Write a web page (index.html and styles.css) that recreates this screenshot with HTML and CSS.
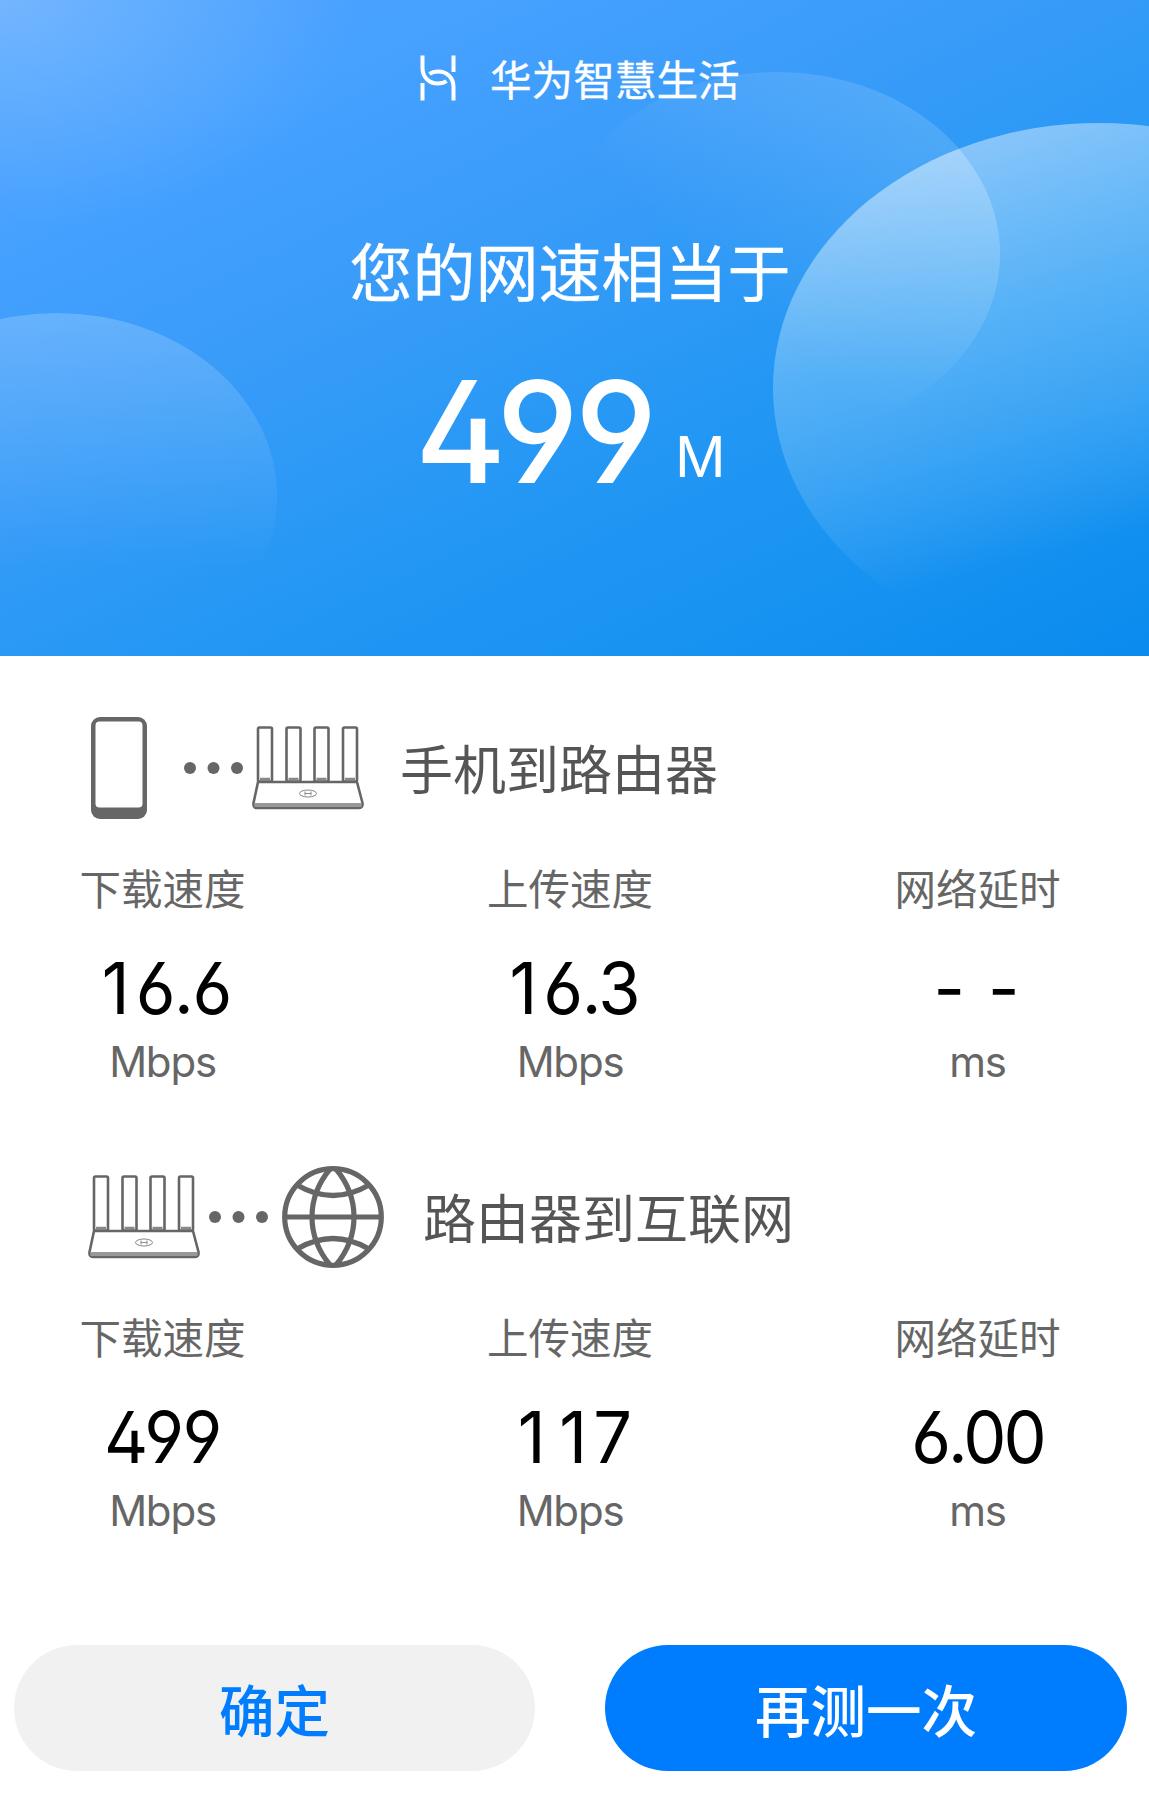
FILE: index.html
```html
<!DOCTYPE html>
<html lang="zh-CN">
<head>
  <meta charset="UTF-8" />
  <title>华为智慧生活 - 网络测速</title>
  <link rel="stylesheet" href="styles.css">
</head>
<body>

<!-- 图标 -->
<svg class="sprite" width="0" height="0">
  <symbol id="icon-router" viewBox="0 0 112 84">
    <g fill="none" stroke="#666" stroke-width="2.6" stroke-linejoin="round">
      <rect x="6" y="1.500" width="14" height="54" rx="1.5" />
      <rect x="34.5" y="1.500" width="14" height="54" rx="1.5" />
      <rect x="62.5" y="1.500" width="14" height="54" rx="1.5" />
      <rect x="91" y="1.500" width="14" height="54" rx="1.5" />
      <path d="M6 56H105L110.5 77Q111 82 107 82H5Q1 82 1.5 77Z" fill="#fff" />
    </g>
    <path d="M2.500 79H109.500" stroke="#999" stroke-width="4" />
    <path d="M3 82H109" stroke="#666" stroke-width="2" />
    <path d="M8 53H18M36.500 53H46.500M64.500 53H74.500M93 53H103" stroke="#888" stroke-width="2.400" />
    <g fill="none" stroke="#888" stroke-width="1">
      <ellipse cx="56" cy="67.500" rx="8.500" ry="3.500" />
      <path d="M53 65.500V69.500M59 65.500V69.500M53 67.500H59" />
    </g>
  </symbol>
  <symbol id="icon-dots" viewBox="0 0 60 12">
    <g fill="#666">
      <circle cx="6" cy="6" r="6" />
      <circle cx="29.500" cy="6" r="6" />
      <circle cx="53" cy="6" r="6" />
    </g>
  </symbol>
</svg>

<header class="hero">
  <svg class="hero-bg" viewBox="0 0 1149 656">
    <defs>
      <linearGradient id="g-mid" x1="0.8" y1="0.05" x2="0.3" y2="0.5">
        <stop offset="0" stop-color="#fff" stop-opacity="0.15" />
        <stop offset="1" stop-color="#fff" stop-opacity="0" />
      </linearGradient>
      <linearGradient id="g-right" x1="0.25" y1="0" x2="0.52" y2="0.78">
        <stop offset="0" stop-color="#fff" stop-opacity="0.46" />
        <stop offset="0.5" stop-color="#cdf0ff" stop-opacity="0.28" />
        <stop offset="1" stop-color="#fff" stop-opacity="0" />
      </linearGradient>
      <linearGradient id="g-over" x1="0.6" y1="0" x2="0.5" y2="1">
        <stop offset="0.1" stop-color="#fff" stop-opacity="0.14" />
        <stop offset="0.85" stop-color="#fff" stop-opacity="0" />
      </linearGradient>
      <linearGradient id="g-left" x1="0" y1="0" x2="0" y2="1">
        <stop offset="0" stop-color="#fff" stop-opacity="0.2" />
        <stop offset="0.7" stop-color="#fff" stop-opacity="0" />
      </linearGradient>
      <clipPath id="clip-right"><ellipse cx="1099" cy="388" rx="326" ry="265" /></clipPath>
    </defs>
    <ellipse cx="777" cy="254" rx="223" ry="182" fill="url(#g-mid)" />
    <ellipse cx="1099" cy="388" rx="326" ry="265" fill="url(#g-right)" />
    <ellipse cx="777" cy="254" rx="223" ry="182" fill="url(#g-over)" clip-path="url(#clip-right)" />
    <ellipse cx="57" cy="496" rx="220" ry="183" fill="url(#g-left)" />
  </svg>

  <div class="brand">
    <svg class="brand-logo" width="36" height="46" viewBox="0 0 36 46">
      <g fill="none" stroke="#fff" stroke-width="4">
        <path d="M2.500 0.500V13C2.500 23 10 28.500 17.500 28.500C21 28.500 24 28 26.500 26" />
        <path d="M33.500 45.500V32C33.500 22 26 16.500 18.500 16.500C15 16.500 12 17 9.500 19" />
        <path d="M2.500 28V45.500M33.500 0.500V17" />
      </g>
    </svg>
    <span>华为智慧生活</span>
  </div>
  <h1 class="headline">您的网速相当于</h1>
  <div class="speed">
    <span class="speed-num">499</span>
    <span class="speed-unit">M</span>
  </div>
</header>

<main class="content">

  <!-- 手机到路由器 -->
  <section class="group">
    <div class="group-head">
      <svg class="icon-phone" width="56" height="102" viewBox="0 0 56 102">
        <rect x="0" y="0" width="56" height="102" rx="9" fill="#666" />
        <rect x="4.500" y="4.500" width="47" height="86" rx="4" fill="#fff" />
      </svg>
      <svg class="dots-phone" width="60" height="12"><use href="#icon-dots" /></svg>
      <svg class="icon-router" width="112" height="84"><use href="#icon-router" /></svg>
      <h2 class="title-phone">手机到路由器</h2>
    </div>
    <div class="stats">
      <div class="stat">
        <div class="label">下载速度</div>
        <div class="value"><span class="one">1</span>6.6</div>
        <div class="unit">Mbps</div>
      </div>
      <div class="stat">
        <div class="label">上传速度</div>
        <div class="value"><span class="one">1</span>6.3</div>
        <div class="unit">Mbps</div>
      </div>
      <div class="stat">
        <div class="label">网络延时</div>
        <div class="value empty">- -</div>
        <div class="unit">ms</div>
      </div>
    </div>
  </section>

  <!-- 路由器到互联网 -->
  <section class="group">
    <div class="group-head">
      <svg class="icon-router first" width="112" height="84"><use href="#icon-router" /></svg>
      <svg class="dots-net" width="60" height="12"><use href="#icon-dots" /></svg>
      <svg class="icon-globe" width="102" height="102" viewBox="0 0 102 102">
        <g fill="none" stroke="#666" stroke-width="5.200">
          <circle cx="51" cy="51" r="48.300" />
          <path d="M2 51H100" />
          <path d="M48 3C24 32 24 70 48 99M54 3C78 32 78 70 54 99" />
          <path d="M15 19Q51 40 87 19M15 83Q51 62 87 83" />
        </g>
      </svg>
      <h2 class="title-net">路由器到互联网</h2>
    </div>
    <div class="stats">
      <div class="stat">
        <div class="label">下载速度</div>
        <div class="value">499</div>
        <div class="unit">Mbps</div>
      </div>
      <div class="stat">
        <div class="label">上传速度</div>
        <div class="value"><span class="one">1</span><span class="one">1</span>7</div>
        <div class="unit">Mbps</div>
      </div>
      <div class="stat">
        <div class="label">网络延时</div>
        <div class="value delay">6.00</div>
        <div class="unit">ms</div>
      </div>
    </div>
  </section>
</main>

<footer class="actions">
  <button class="btn">确定</button>
  <button class="btn btn-primary">再测一次</button>
</footer>

</body>
</html>
```
FILE: styles.css
```css
* {
  box-sizing: border-box;
}
body {
  margin: 0;
  height: 1811px;
  background: #fff;
  font-family: "Noto Sans CJK SC", sans-serif;
  overflow: hidden;
}
h1, h2 {
  margin: 0;
  font-weight: 400;
}
svg {
  display: block;
  flex: none;
}
.sprite {
  position: absolute;
}

/* 顶部 */
.hero {
  position: relative;
  height: 656px;
  padding-top: 48px;
  color: #fff;
  background:
    radial-gradient(ellipse 360px 230px at 0 0, rgba(255, 255, 255, 0.21), rgba(255, 255, 255, 0)),
    linear-gradient(155deg, #4ea2ff 0%, #47a1ff 18%, #3a9cf9 38%, #2497f4 62%, #1893f2 80%, #0a8bed 100%);
}
.hero-bg {
  position: absolute;
  left: 0;
  top: 0;
  width: 100%;
  height: 100%;
}
.brand, .headline, .speed {
  position: relative;
}
.brand {
  display: flex;
  align-items: center;
  height: 60px;
  padding-left: 420px;
  font-size: 41.6px;
  line-height: 60px;
  -webkit-text-stroke: 0.3px #fff;
}
.brand-logo {
  margin-right: 34px;
}
.headline {
  margin-top: 121px;
  padding-right: 9px;
  font-size: 63px;
  line-height: 80px;
  text-align: center;
  -webkit-text-stroke: 0.4px #fff;
}
.speed {
  display: flex;
  height: 140px;
  margin-top: 53px;
  padding-left: 415px;
  font-family: Inter, sans-serif;
}
.speed-num {
  width: 260px;
  font-size: 141px;
  line-height: 140px;
  font-weight: 480;
  font-feature-settings: "cv02", "cv03", "cv04";
  letter-spacing: -4px;
  transform: scaleX(0.985);
  transform-origin: left;
}
.speed-unit {
  font-size: 56px;
  line-height: 190px;
}

/* 测速结果 */
.content {
  padding-top: 52px;
}
.group {
  height: 449px;
  padding: 0 88px 0 79px;
}
.group-head {
  display: flex;
  align-items: center;
  height: 120px;
}
.group-head h2 {
  font-size: 53px;
  line-height: 118px;
  margin-bottom: 2px;
  color: #555;
}
.icon-phone {
  margin-left: 12px;
}
.dots-phone {
  margin-left: 37px;
}
.dots-phone + .icon-router {
  margin-left: 8px;
}
.icon-router.first {
  margin-left: 9px;
}
.dots-net {
  margin-left: 9px;
}
.icon-globe {
  margin-left: 13px;
}
.title-phone {
  margin-left: 36px;
}
.title-net {
  margin-left: 39px;
}
.stats {
  display: flex;
  justify-content: space-between;
  margin-top: 29px;
}
.stat {
  width: 167px;
  text-align: center;
  white-space: nowrap;
}
.label {
  font-size: 41.5px;
  line-height: 60px;
  color: #666;
}
.value {
  margin-top: 29px;
  font-family: Inter, sans-serif;
  font-size: 71px;
  line-height: 84px;
  color: #000;
  font-weight: 430;
  font-feature-settings: "cv02", "cv03", "cv04";
  letter-spacing: -1.5px;
  transform: scaleX(0.965);
}
.value .one {
  display: inline-block;
  width: 43px;
  text-align: center;
}
.value.empty {
  letter-spacing: 2px;
}
.value.delay {
  letter-spacing: -3px;
}
.unit {
  margin-top: 2px;
  font-family: Inter, sans-serif;
  font-size: 42px;
  line-height: 60px;
  color: #666;
  letter-spacing: -1.2px;
}

/* 按钮 */
.actions {
  display: flex;
  justify-content: space-between;
  margin-top: 39px;
  padding: 0 22px 0 14px;
}
.btn {
  width: 521px;
  height: 126px;
  border: none;
  border-radius: 63px;
  background: #f1f1f1;
  color: #007dff;
  font-family: "Noto Sans CJK SC", sans-serif;
  font-size: 55.5px;
  font-weight: 500;
}
.btn-primary {
  width: 522px;
  background: #007dff;
  color: #fff;
}
```
